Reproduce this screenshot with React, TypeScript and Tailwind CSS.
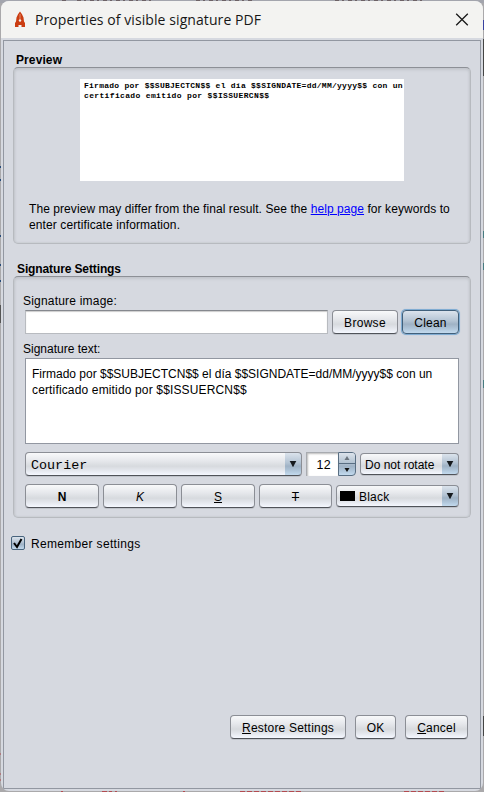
import type { ReactNode } from "react";

const face = "bg-[linear-gradient(180deg,#f8f9fa_0%,#e6e8ec_35%,#d7dade_60%,#e3e6ec_78%,#f5f8ff_100%)]";
const blueFace = "bg-[linear-gradient(180deg,#dbe3ec_0%,#b3c3d3_45%,#9fb2c5_60%,#afc5d9_80%,#c3daee_100%)]";
const edge = "border border-[#8b8e95] border-b-[#505359] rounded-[4px] shadow-[0_1px_0_#bfc3ca]";

function Button({ children, className = "" }: { children: ReactNode; className?: string }) {
  return (
    <button className={`flex h-6 shrink-0 items-center justify-center whitespace-nowrap pt-px ${edge} ${face} ${className}`}>
      {children}
    </button>
  );
}

function Triangle({ up = false }: { up?: boolean }) {
  return up ? (
    <svg width="6" height="4" viewBox="0 0 6 4"><path d="M3 0L5.5 4H.5Z" fill="#6b747d" /></svg>
  ) : (
    <svg width="6" height="4" viewBox="0 0 6 4"><path d="M0.5 0H5.5L3 4Z" fill="#111" /></svg>
  );
}

function Combo({ children, className = "" }: { children: ReactNode; className?: string }) {
  return (
    <div className={`flex shrink-0 overflow-hidden whitespace-nowrap ${edge} ${face} ${className}`}>
      <div className="flex flex-1 items-center pt-px">{children}</div>
      <div className={`-my-px -mr-px flex w-[17px] items-center justify-center rounded-r-[4px] border border-l-0 border-[#64798d] border-b-[#304a61] ${blueFace}`}>
        <svg width="8" height="8" viewBox="0 0 8 8"><path d="M.7 1H7.3L4 7.2Z" fill="#15191d" /></svg>
      </div>
    </div>
  );
}

const panel =
  "ml-[9px] w-[458px] rounded-[5px] border border-[#b7babf] border-t-[#8d9096] shadow-[inset_0_2px_3px_#c3c6cc,inset_1px_0_2px_#c6c9cf,inset_-1px_0_2px_#c6c9cf]";

export default function App() {
  return (
    <div className="relative h-[792px] w-[484px] overflow-hidden bg-[#aaa9ab] font-['Liberation_Sans',Arial,sans-serif] text-[12px] leading-4 text-black">
      <svg className="absolute inset-0" width="484" height="792">
        <path d="M0 0H484V3H0Z" fill="#a3a5ad" />
        <path d="M62 1h6M77 1h75M196 1h58M335 1h90" stroke="#6d6266" strokeWidth="2" strokeDasharray="4 3 2 4" />
        <path d="M0 167h1M0 180h1M0 236h2M0 265h1M0 281h2" stroke="#254a78" strokeWidth="2" />
        <path d="M0 305h1v18H0Z" fill="#555" />
        <path d="M0 754h1M0 774h1M0 780h1M61 791.5h2M102 791.5h10M115 791.5h2M183 791.5h2M240 791.5h62M404 791.5h42" stroke="#b34b50" strokeWidth="1" strokeDasharray="5 2" />
        <path d="M483 20V30" stroke="#3942a0" strokeWidth="2" />
        <path d="M483 39V76M483 716V736" stroke="#444" strokeWidth="2" />
        <path d="M483 231v7M483 263v7M483 380v8" stroke="#477b80" strokeWidth="2" />
      </svg>
      <div className="relative ml-px mt-px flex h-[790px] w-[482px] flex-col overflow-hidden rounded-[8px] bg-[#d6d9e0]">
        <header className="flex h-[37px] shrink-0 items-center bg-[#f3f3f1]">
          <svg className="ml-[13px]" width="12" height="17" viewBox="0 0 12 17">
            <path d="M6 .5L8 3.2L9.5 6.5L10 10.5L11 12V16H7.5V14H4.5V16H1V12L2 10.5L2.5 6.5L4 3.2Z" fill="#cb3d12" />
            <path d="M6 3V8" stroke="#e8a188" strokeWidth=".8" />
            <circle cx="6" cy="9.5" r="1.2" fill="#f3f3f1" />
          </svg>
          <h1 className="ml-[9px] whitespace-nowrap font-['Open_Sans','Noto_Sans',sans-serif] text-[14px] leading-5 tracking-[.08px] text-[#171717]">Properties of visible signature PDF</h1>
          <svg className="ml-auto mr-[14px]" width="14" height="14" viewBox="0 0 14 14"><path d="M1.2 .7L12.8 12.3M12.8 .7L1.2 12.3" stroke="#191919" strokeWidth="1.3" /></svg>
        </header>

        <main className="ml-[2px] mt-[2px] h-[749px] w-[478px] border border-[#9297a1]">
          <h2 className="ml-3 mt-[11px] h-[15px] font-bold tracking-[.1px]">Preview</h2>
          <section className={`${panel} h-[177px] overflow-hidden`}>
            <div className="ml-[66px] mt-[11px] h-[102px] w-[324px] bg-white pl-1 pt-[2px]">
              <p className="whitespace-pre font-['Liberation_Mono',monospace] text-[8px] font-bold leading-[10px] tracking-[.26px]">
                Firmado por $$SUBJECTCN$$ el día $$SIGNDATE=dd/MM/yyyy$$ con un<br />
                <span className="tracking-[.35px]">certificado emitido por $$ISSUERCN$$</span>
              </p>
            </div>
            <p className="ml-[15px] mt-5 whitespace-nowrap tracking-[.07px]">
              The preview may differ from the final result. See the <a className="text-[#0000ff] underline">help page</a> for keywords to<br />
              <span className="tracking-[.1px]">enter certificate information.</span>
            </p>
          </section>

          <h2 className="ml-[13px] mt-[17px] h-[15px] font-bold tracking-[-.12px]">Signature Settings</h2>
          <section className={`${panel} h-[242px] pl-[11px]`}>
            <div className="-ml-[2px] pt-[16px] tracking-[.2px]">Signature image:</div>
            <div className="mt-[1px] flex h-6">
              <div className="h-6 w-[303px] shrink-0 border border-[#b8bbc0] border-t-[#85888e] bg-white shadow-[inset_0_1px_1px_#ccc]" />
              <Button className="ml-1 w-[66px] tracking-[.3px]">Browse</Button>
              <button className={`ml-[4px] flex h-6 w-[57px] items-center justify-center rounded-[4px] border border-[#41607b] pt-px tracking-[.2px] shadow-[0_0_0_1px_#80acd2,0_0_1px_1px_#9dbbd8] ${blueFace}`}>Clean</button>
            </div>
            <div className="-ml-[2px] mt-[7px]">Signature text:</div>
            <div className="mt-[1px] h-[86px] w-[434px] whitespace-nowrap border border-[#9297a1] bg-white pl-[6px] pt-[7px]">
              Firmado por $$SUBJECTCN$$ el día $$SIGNDATE=dd/MM/yyyy$$ con un<br />
              <span className="tracking-[.15px]">certificado emitido por $$ISSUERCN$$</span>
            </div>
            <div className="mt-2 flex h-6 items-center">
              <Combo className="h-6 w-[277px]"><span className="ml-[5px] mt-[2px] font-['Liberation_Mono',monospace] text-[13.4px]">Courier</span></Combo>
              <div className="ml-1 flex h-6 w-[50px]">
                <div className="flex flex-1 items-center justify-end border-l border-t border-[#a8abb0] bg-white pr-[7px] text-[12.5px] tracking-[.3px] shadow-[inset_1px_1px_2px_#bbb]">12</div>
                <div className={`flex w-[18px] flex-col rounded-r-[4px] border border-[#596e82] ${blueFace}`}>
                  <div className="flex h-[11px] items-center justify-center rounded-tr-[3px] border-b border-[#596e82] bg-[linear-gradient(#dce3eb,#b2c2d1)]"><Triangle up /></div>
                  <div className="flex flex-1 items-center justify-center"><Triangle /></div>
                </div>
              </div>
              <Combo className="ml-1 h-[22px] w-[99px]"><span className="ml-1">Do not rotate</span></Combo>
            </div>
            <div className="mt-2 flex h-6">
              <Button className="w-[74px] font-bold">N</Button>
              <Button className="ml-1 w-[74px] italic">K</Button>
              <Button className="ml-1 w-[74px] underline">S</Button>
              <Button className="ml-1 w-[73px] line-through">T</Button>
              <Combo className="ml-1 mt-px h-[22px] w-[123px]"><span className="-mt-px ml-[3px] h-[10px] w-[15px] bg-black" /><span className="ml-1 tracking-[.2px]">Black</span></Combo>
            </div>
          </section>

          <label className="ml-[7px] mt-[17px] flex h-4 items-center">
            <span className={`flex h-[14px] w-[14px] items-center justify-center rounded-[2px] border border-[#48647d] ${blueFace}`}>
              <svg width="10" height="11" viewBox="0 0 10 11"><path d="M1 5L4 9L8.5 1" fill="none" stroke="#000" strokeWidth="2" /></svg>
            </span>
            <span className="ml-[6px] mt-px tracking-[.32px]">Remember settings</span>
          </label>

          <footer className="mr-3 mt-[164px] flex justify-end gap-[9px]">
            <Button className="w-[116px] tracking-[.2px]"><span><u>R</u>estore Settings</span></Button>
            <Button className="w-[41px]">OK</Button>
            <Button className="w-[63px] tracking-[.2px]"><span><u>C</u>ancel</span></Button>
          </footer>
        </main>
      </div>
    </div>
  );
}
